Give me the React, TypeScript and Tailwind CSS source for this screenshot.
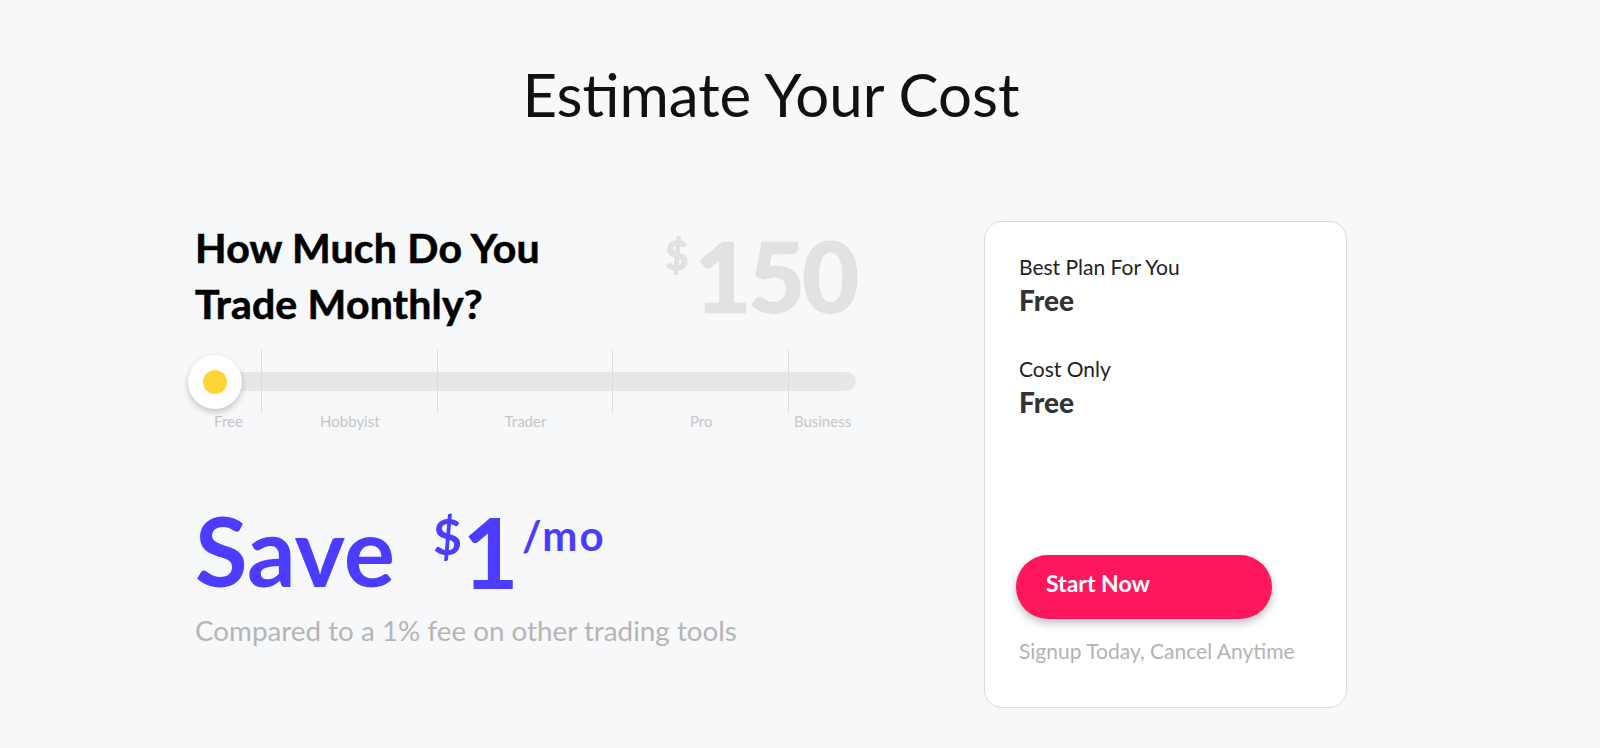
import React from "react";

const font = { fontFamily: "Lato, 'Noto Sans', sans-serif" };

export default function App() {
  const labels = ["Free", "Hobbyist", "Trader", "Pro", "Business"];
  return (
    <div className="min-h-[748px] w-full bg-[#f7f8fa] text-black" style={font}>
      <div className="ml-[195px] w-[1152px]">
        <h1 className="pt-[64px] text-center text-[60px] font-normal leading-none text-[#111]">
          Estimate Your Cost
        </h1>
        <div className="mt-[96px] flex items-start gap-[128px]">
          {/* Left column */}
          <div className="w-[661px]">
            <div className="flex items-start justify-between">
              <h2 className="text-[41px] font-bold leading-[56px] tracking-[0.2px] text-black [-webkit-text-stroke:0.6px_#000]">
                How Much Do You
                <br />
                Trade Monthly?
              </h2>
              <div className="flex items-start text-[#e2e2e2] [text-shadow:0_0_1px_rgba(0,0,0,0.25)]">
                <span className="mt-[15px] text-[40px] font-bold leading-none">$</span>
                <span className="ml-[6px] mt-[6px] text-[98px] font-black leading-none tracking-[-3px]">150</span>
              </div>
            </div>

            {/* Slider */}
            <div className="mt-[18px]">
              <div className="relative h-[63px]">
                <div className="absolute left-0 right-0 top-[22px] h-[19px] rounded-full bg-[#e7e7e7]" />
                <div className="relative flex h-full">
                  <div className="w-[67px] border-r border-[#dcdcdc]" />
                  <div className="flex-1 border-r border-[#dcdcdc]" />
                  <div className="flex-1 border-r border-[#dcdcdc]" />
                  <div className="flex-1 border-r border-[#dcdcdc]" />
                  <div className="w-[67px]" />
                </div>
                <div className="absolute left-[-7px] top-[5px] flex h-[54px] w-[54px] items-center justify-center rounded-full bg-white shadow-[0_3px_6px_rgba(0,0,0,0.22)]">
                  <div className="h-[24px] w-[24px] rounded-full bg-[#fdd535]" />
                </div>
              </div>
              <div className="flex text-[15px] leading-4 text-[#c6c6c6]">
                <div className="w-[67px] text-center">{labels[0]}</div>
                <div className="flex-1 text-center">{labels[1]}</div>
                <div className="flex-1 text-center">{labels[2]}</div>
                <div className="flex-1 text-center">{labels[3]}</div>
                <div className="w-[67px] text-center">{labels[4]}</div>
              </div>
            </div>

            {/* Save */}
            <div className="mt-[73px] flex items-start text-[#4b3cff]">
              <span className="text-[96px] font-bold leading-none">Save</span>
              <span className="ml-[38px] mt-[9px] text-[50px] font-bold leading-none">$</span>
              <span className="text-[98px] font-bold leading-none">1</span>
              <span className="ml-[3px] mt-[12px] text-[42px] font-bold leading-none tracking-[2px]">/mo</span>
            </div>
            <p className="mt-[14px] text-[27.8px] leading-[34px] text-[#b5b5b5]">
              Compared to a 1% fee on other trading tools
            </p>
          </div>

          {/* Card */}
          <div className="mt-[1px] flex h-[487px] w-[363px] flex-col rounded-[18px] border border-[#d9d9d9] bg-white pl-[31px] pr-[31px] pt-[32px] pb-[44px]">
            <div className="ml-[3px] text-[21px] leading-[25px] text-[#222]">Best Plan For You</div>
            <div className="ml-[3px] mt-[5px] text-[28px] font-black leading-[32px] text-[#333]">Free</div>
            <div className="ml-[3px] mt-[40px] text-[21px] leading-[25px] text-[#222]">Cost Only</div>
            <div className="ml-[3px] mt-[5px] text-[28px] font-black leading-[32px] text-[#333]">Free</div>
            <div className="mt-auto">
              <button className="flex h-[64px] w-[256px] items-center rounded-full bg-[#ff175d] pb-[7px] pl-[30px] text-[23px] font-bold text-white shadow-[0_4px_8px_rgba(0,0,0,0.25)]">
                Start Now
              </button>
              <div className="ml-[3px] mt-[19px] text-[21px] leading-[25px] text-[#b3b3b3]">
                Signup Today, Cancel Anytime
              </div>
            </div>
          </div>
        </div>
      </div>
    </div>
  );
}
